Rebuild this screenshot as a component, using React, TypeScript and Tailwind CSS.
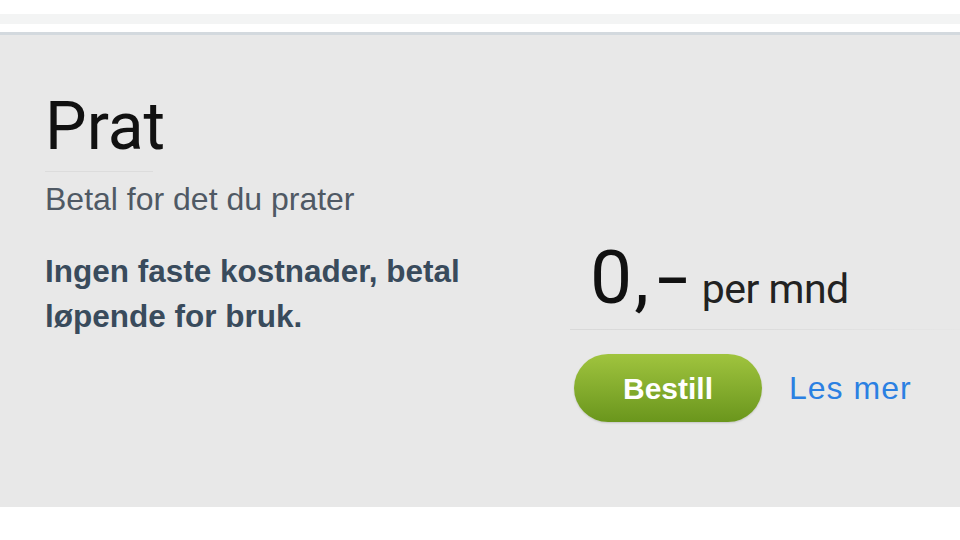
export default function App() {
  return (
    <div className="h-[540px] w-[960px] overflow-hidden bg-white">
      <div className="h-[14px]" />
      <div className="h-[10px] bg-[#f3f4f4]" />
      <div className="h-[8px]" />
      <div className="h-[3px] bg-[#d3d9de]" />

      <div className="flex h-[472px] bg-[#e8e8e8]">
        <div className="w-[570px] shrink-0 pl-[45px] pt-[59px]">
          <h1 className="font-['Roboto',sans-serif] text-[66px] leading-none text-[#111]">Prat</h1>
          <div className="mt-[11px] h-px w-[108px] bg-[#dcdcdc]" />
          <p className="mt-[11px] font-['Liberation_Sans',Arial,sans-serif] text-[32px] leading-none text-[#4f5964]">
            Betal for det du prater
          </p>
          <p className="mt-[34px] w-[450px] font-['Liberation_Sans',Arial,sans-serif] text-[31.5px] font-bold leading-[45px] text-[#394b5c]">
            Ingen faste kostnader, betal løpende for bruk.
          </p>
        </div>

        <div className="flex-1 pt-[205px]">
          <div className="flex items-baseline pl-[20px] font-['Roboto',sans-serif] leading-none text-[#111]">
            <span className="text-[75px] tracking-[2px]">0,</span>
            <span className="ml-[6px] inline-block origin-left scale-x-150 text-[75px]">-</span>
            <span className="ml-[24px] text-[41px] tracking-[-0.5px] text-[#222]">per mnd</span>
          </div>
          <div className="mt-[14px] h-px bg-gradient-to-r from-[#d9d9d9] via-[#dcdcdc] to-[#e6e6e6]" />
          <div className="mt-[24px] flex items-center">
            <button className="ml-[4px] flex h-[68px] w-[188px] items-center justify-center rounded-full bg-gradient-to-b from-[#a0c43e] to-[#6a961c] font-['Liberation_Sans',Arial,sans-serif] text-[30px] font-bold text-white shadow-[0_1px_2px_rgba(0,0,0,0.15)]">
              Bestill
            </button>
            <a className="ml-[27px] font-['Liberation_Sans',Arial,sans-serif] text-[32px] tracking-[1px] text-[#2b80e2]">
              Les mer
            </a>
          </div>
        </div>
      </div>
    </div>
  )
}
